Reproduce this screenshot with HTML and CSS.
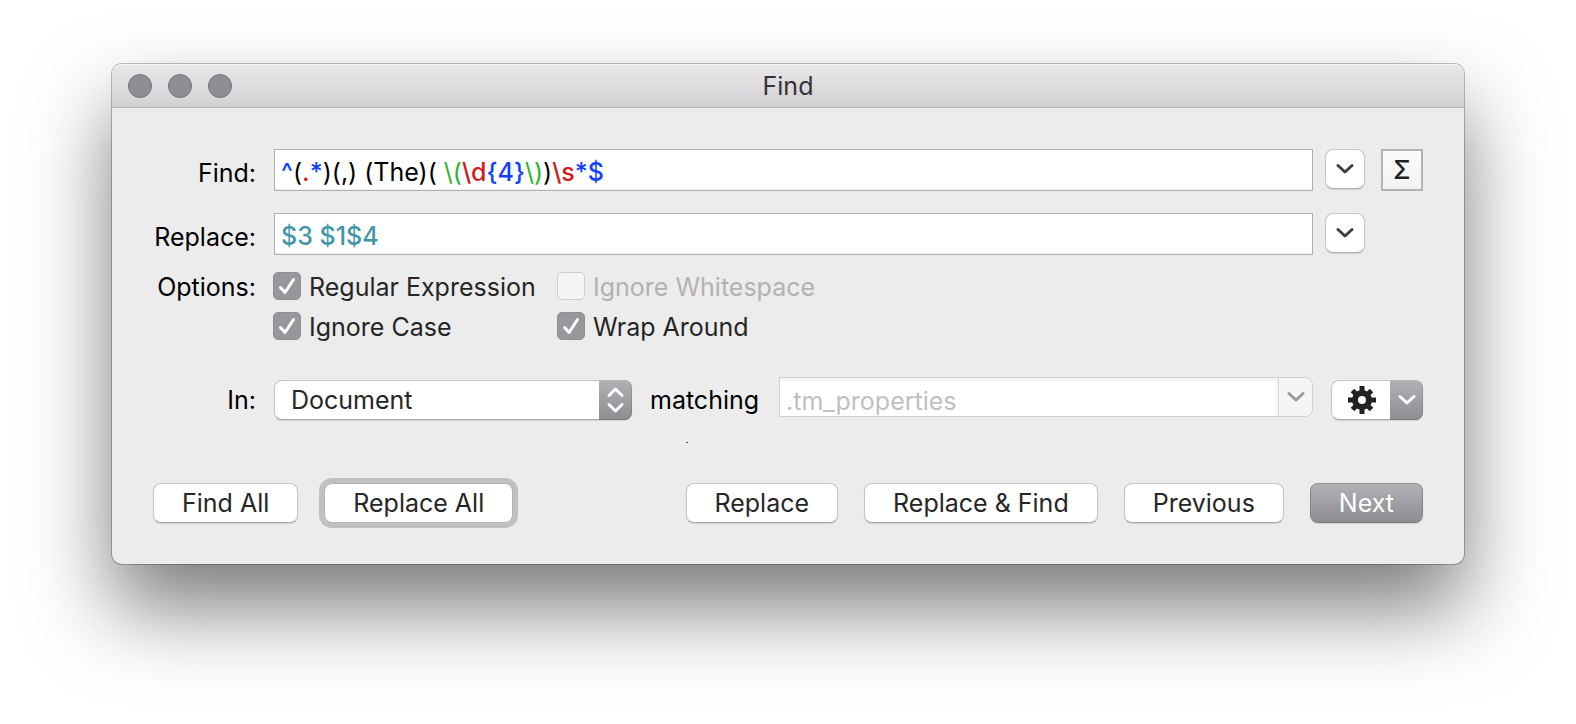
FILE: index.html
```html
<!DOCTYPE html>
<html lang="en">
<head>
<meta charset="utf-8">
<meta name="viewport" content="width=device-width, initial-scale=1">
<title>Find</title>
<link rel="stylesheet" href="styles.css">
</head>
<body>
<main class="window">
  <header class="titlebar">
    <div class="lights">
      <button class="light" type="button" aria-label="Close"></button>
      <button class="light" type="button" aria-label="Minimize"></button>
      <button class="light" type="button" aria-label="Zoom"></button>
    </div>
    <h1 class="title">Find</h1>
  </header>

  <form class="content">
    <div class="row field-row">
      <label class="label" for="find">Find:</label>
      <div class="field highlighted">
        <div class="highlight" aria-hidden="true"><span class="op">^</span>(<span class="cls">.</span><span class="op">*</span>)(,) (The)( <span class="esc">\(</span><span class="cls">\d</span><span class="op">{4}</span><span class="esc">\)</span>)<span class="cls">\s</span><span class="op">*$</span></div>
        <input class="highlight-input" id="find" type="text" value="^(.*)(,) (The)( \(\d{4}\))\s*$" spellcheck="false">
      </div>
      <button class="history" type="button" aria-label="Find history">
        <svg class="chevron" viewBox="0 0 18 12" aria-hidden="true"><path d="M2 2.5 9 9l7-6.5"/></svg>
      </button>
      <button class="count" type="button" aria-label="Count matches">Σ</button>
    </div>

    <div class="row field-row replace-row">
      <label class="label" for="replace">Replace:</label>
      <input class="field replace-input" id="replace" type="text" value="$3 $1$4" spellcheck="false">
      <button class="history" type="button" aria-label="Replace history">
        <svg class="chevron" viewBox="0 0 18 12" aria-hidden="true"><path d="M2 2.5 9 9l7-6.5"/></svg>
      </button>
    </div>

    <div class="row options-row" role="group" aria-labelledby="options">
      <span class="label" id="options">Options:</span>
      <div class="options">
        <label class="option"><span class="tick"><input type="checkbox" checked><svg viewBox="0 0 28 28" aria-hidden="true"><path d="M7.5 15.5 12 20.5 20.5 7.5"/></svg></span>Regular Expression</label>
        <label class="option disabled"><span class="tick"><input type="checkbox" disabled></span>Ignore Whitespace</label>
        <label class="option"><span class="tick"><input type="checkbox" checked><svg viewBox="0 0 28 28" aria-hidden="true"><path d="M7.5 15.5 12 20.5 20.5 7.5"/></svg></span>Ignore Case</label>
        <label class="option"><span class="tick"><input type="checkbox" checked><svg viewBox="0 0 28 28" aria-hidden="true"><path d="M7.5 15.5 12 20.5 20.5 7.5"/></svg></span>Wrap Around</label>
      </div>
    </div>

    <div class="row scope-row">
      <label class="label" for="scope">In:</label>
      <div class="scope">
        <div class="popup">
          <select id="scope"><option>Document</option></select>
          <span class="popup-cap"><svg viewBox="0 0 33 40" aria-hidden="true"><path d="M10 15.5 16.5 9 23 15.5M10 24.5 16.5 31 23 24.5"/></svg></span>
        </div>
        <label class="matching" for="glob">matching</label>
        <div class="combo">
          <input id="glob" type="text" value=".tm_properties" disabled>
          <button type="button" disabled aria-label="Show patterns">
            <svg class="chevron" viewBox="0 0 18 12" aria-hidden="true"><path d="M2 2.5 9 9l7-6.5"/></svg>
          </button>
        </div>
        <button class="actions" type="button" aria-label="Actions">
          <span class="gear"><svg viewBox="-14 -14 28 28" aria-hidden="true">
            <circle r="7" class="gear-body"/>
            <path class="gear-teeth" d="M0-6V-14M0 6V14M-6 0H-14M6 0H14M-5-5-9.5-9.5M5 5 9.5 9.5M-5 5-9.5 9.5M5-5 9.5-9.5"/>
          </svg></span>
          <span class="actions-cap"><svg class="chevron" viewBox="0 0 18 12" aria-hidden="true"><path d="M2 2.5 9 9l7-6.5"/></svg></span>
        </button>
      </div>
    </div>

    <div class="status"><span class="status-mark"></span></div>

    <div class="buttons">
      <button class="push" type="button">Find All</button>
      <button class="push focused" type="button">Replace All</button>
      <span class="spacer"></span>
      <button class="push" type="button">Replace</button>
      <button class="push" type="button">Replace &amp; Find</button>
      <button class="push" type="button">Previous</button>
      <button class="push primary" type="button">Next</button>
    </div>
  </form>
</main>
</body>
</html>
```
FILE: styles.css
```css
* { box-sizing: border-box; }

body {
  margin: 0;
  padding: 64px 112px 160px;
  background: #fff;
  overflow: hidden;
}

body, button, input, select {
  font-family: Inter, "Liberation Sans", sans-serif;
  font-size: 25px;
  line-height: 30px;
  color: #000;
}

button, input, select {
  margin: 0;
  padding: 0;
  border: 0;
  outline: 0;
}

svg { display: block; fill: none; }

.window {
  background: #ececec;
  border-radius: 10px;
  box-shadow: 0 0 0 1px rgba(0, 0, 0, .25), 0 44px 84px rgba(0, 0, 0, .52);
}

.titlebar {
  display: grid;
  grid-template-columns: 1fr auto 1fr;
  align-items: center;
  height: 44px;
  padding: 0 16px;
  border-bottom: 1px solid #b3b0b3;
  border-radius: 10px 10px 0 0;
  background: linear-gradient(#e9e7ea, #d2d0d3);
  box-shadow: inset 0 1px #f6f5f6;
}

.lights { display: flex; gap: 16px; }

.light {
  width: 24px;
  height: 24px;
  border: 1px solid #727176;
  border-radius: 50%;
  background: #8f8e93;
}

.title {
  margin: 0;
  font-size: 25px;
  font-weight: 400;
  color: #333;
}

.content { padding: 41px; }

.row { display: grid; grid-template-columns: 103px minmax(0, 1fr); }
.label { text-align: right; white-space: nowrap; }

.field-row {
  grid-template-columns: 103px minmax(0, 1fr) 52px 58px;
  align-items: center;
}
.field-row .field { margin-left: 18px; }
.field-row .label { padding-top: 6px; }
.replace-row { margin-top: 22px; }

.field {
  height: 42px;
  border: 1px solid #b0b0b0;
  background: #fff;
  box-shadow: inset 0 -1px #f0f0f0;
}

.highlighted { display: grid; }
.highlight, .highlight-input {
  grid-area: 1 / 1;
  padding: 7px 6px 3px;
  white-space: pre;
}
.highlight-input {
  width: 100%;
  background: transparent;
  color: transparent;
  caret-color: #000;
}
.op { color: #0f3fff; font-weight: 500; }
.cls { color: #d3191d; font-weight: 500; }
.esc { color: #2bb52b; }

.replace-input { padding: 7px 6px 3px; color: #4197a8; font-weight: 500; }

.history {
  display: grid;
  place-items: center;
  place-self: start end;
  width: 40px;
  height: 40px;
  border: 1px solid #c6c6c6;
  border-bottom-color: #b0b0b0;
  border-radius: 8px;
  background: #fff;
  box-shadow: 0 1px 1px rgba(0, 0, 0, .12);
}

.chevron {
  width: 18px;
  height: 12px;
  stroke: #404040;
  stroke-width: 3;
  stroke-linecap: round;
  stroke-linejoin: round;
}

.count {
  justify-self: end;
  width: 42px;
  height: 42px;
  border: 2px solid #b3b3b3;
  background: linear-gradient(#fbfbfb, #f3f3f3);
  color: #222;
  font-weight: 500;
}

.options-row { column-gap: 17px; margin-top: 17px; }

.options {
  display: grid;
  grid-template-columns: 284px max-content;
  row-gap: 10px;
}

.option {
  display: flex;
  align-items: center;
  gap: 8px;
  color: #262626;
  white-space: nowrap;
}
.option.disabled { color: #b2b2b2; }

.tick { display: grid; width: 28px; height: 28px; margin-bottom: 2px; }
.tick input, .tick svg { grid-area: 1 / 1; width: 28px; height: 28px; }
.tick svg {
  stroke: #fff;
  stroke-width: 3;
  stroke-linecap: round;
  stroke-linejoin: round;
  pointer-events: none;
}
.tick input {
  appearance: none;
  border-radius: 5px;
  border: 1px solid #8f8e93;
  background: #98979c;
}
.tick input:disabled { border-color: #cdcdcd; background: #f5f5f5; }

.scope-row { column-gap: 18px; align-items: center; margin-top: 35px; }
.scope { display: flex; align-items: center; gap: 18px; }

.popup { display: grid; grid-template-columns: 325px 33px; height: 40px; }
.popup select {
  grid-area: 1 / 1 / 2 / 3;
  appearance: none;
  padding: 0 49px 0 16px;
  border: 1px solid #c6c6c6;
  border-bottom-color: #aaa;
  border-radius: 8px;
  background: #fff;
  box-shadow: 0 1px 1px rgba(0, 0, 0, .12);
  color: #262626;
}
.popup-cap, .actions-cap {
  border-radius: 0 8px 8px 0;
  background: linear-gradient(#b2b1b6, #8d8c91);
  box-shadow: inset 0 -1px #7d7c81, inset -1px 0 rgba(0, 0, 0, .1);
}
.popup-cap { grid-area: 1 / 2; pointer-events: none; }
.popup-cap svg {
  stroke: #fff;
  stroke-width: 3;
  stroke-linecap: round;
  stroke-linejoin: round;
}

.matching { width: 111px; }

.combo {
  display: flex;
  flex: 1;
  min-width: 0;
  height: 40px;
  margin-bottom: 6px;
  border: 1px solid #d0d0d0;
  border-radius: 0 8px 8px 0;
  background: #f5f5f5;
}
.combo input {
  flex: 1;
  min-width: 0;
  padding: 4px 6px 0;
  border: solid #f5f5f5;
  border-width: 3px 2px 0 0;
  background: #fff;
  color: #bfbfbf;
}
.combo button {
  display: grid;
  place-items: center;
  width: 34px;
  border-left: 1px solid #d8d8d8;
  border-radius: 0 8px 8px 0;
  background: #f5f5f5;
}
.combo .chevron { stroke: #999; }

.actions {
  display: grid;
  grid-template-columns: 1fr 33px;
  width: 92px;
  height: 40px;
  border-radius: 8px;
  background: #fff;
  box-shadow: 0 1px 1px rgba(0, 0, 0, .12);
}
.gear, .actions-cap { display: grid; place-items: center; }
.gear {
  padding-left: 2px;
  border: 1px solid #c6c6c6;
  border-right: 0;
  border-bottom-color: #aaa;
  border-radius: 8px 0 0 8px;
}
.gear svg { width: 28px; height: 28px; }
.gear-body { stroke: #222; stroke-width: 6; }
.gear-teeth { stroke: #222; stroke-width: 5; }
.actions .chevron { stroke: #fff; }

.status { display: flex; height: 60px; padding: 19px 0 0 533px; }
.status-mark { width: 2px; height: 1px; background: #555; }

.buttons { display: flex; gap: 26px; }
.spacer { flex: 1; }

.push {
  height: 40px;
  padding: 0 28px;
  border: 1px solid #c6c6c6;
  border-bottom-color: #aaa;
  border-radius: 8px;
  background: #fff;
  box-shadow: 0 1px 1px rgba(0, 0, 0, .12);
  color: #262626;
  white-space: nowrap;
}
.push.focused { box-shadow: 0 0 0 5px #c0c0c2; border-color: #b4b4b6; }
.push.primary {
  border-color: #929196 #88878c #7d7c81;
  background: linear-gradient(#b2b1b6, #8d8c91);
  color: #fff;
}
```
